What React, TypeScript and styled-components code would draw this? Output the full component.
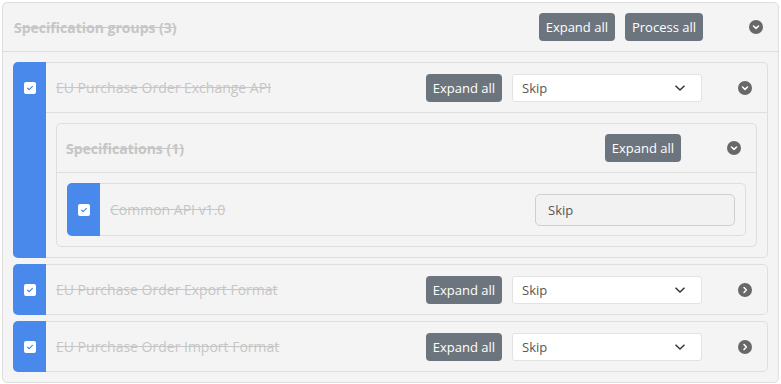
import React from "react";
import styled, { createGlobalStyle } from "styled-components";

const GlobalStyle = createGlobalStyle`
  body {
    margin: 0;
    background: #ffffff;
    font-family: "Open Sans", "Liberation Sans", sans-serif;
  }
`;

type Group = {
  name: string;
  expanded: boolean;
  specs: string[];
};

const groups: Group[] = [
  { name: "EU Purchase Order Exchange API", expanded: true, specs: ["Common API v1.0"] },
  { name: "EU Purchase Order Export Format", expanded: false, specs: [] },
  { name: "EU Purchase Order Import Format", expanded: false, specs: [] },
];

const ChevronDown = () => (
  <svg width="8" height="8" viewBox="0 0 8 8">
    <path d="M1.5 3 L4 5.4 L6.5 3" fill="none" stroke="#fff" strokeWidth="1.5" strokeLinecap="round" strokeLinejoin="round" />
  </svg>
);

const ChevronRight = () => (
  <svg width="8" height="8" viewBox="0 0 8 8">
    <path d="M3 1.5 L5.4 4 L3 6.5" fill="none" stroke="#fff" strokeWidth="1.5" strokeLinecap="round" strokeLinejoin="round" />
  </svg>
);

const Check = () => (
  <svg width="8" height="8" viewBox="0 0 8 8">
    <path d="M1.6 4.2 L3.3 5.7 L6.4 2.4" fill="none" stroke="#4a89ec" strokeWidth="1.2" strokeLinecap="round" strokeLinejoin="round" />
  </svg>
);

const Toggle = ({ open }: { open: boolean }) => (
  <ToggleCell>
    <ToggleCircle>{open ? <ChevronDown /> : <ChevronRight />}</ToggleCircle>
  </ToggleCell>
);

const SkipSelect = () => (
  <Select>
    <span>Skip</span>
    <svg width="12" height="8" viewBox="0 0 12 8">
      <path d="M1.5 1.8 L6 6 L10.5 1.8" fill="none" stroke="#333" strokeWidth="1.5" />
    </svg>
  </Select>
);

export default function App() {
  return (
    <Page>
      <GlobalStyle />
      <Card>
        <CardHeader $height={48} $inset={11}>
          <BoldTitle>Specification groups (3)</BoldTitle>
          <Actions $trail={31}>
            <Button>Expand all</Button>
            <Button>Process all</Button>
          </Actions>
          <Toggle open />
        </CardHeader>
        <CardBody>
          {groups.map((g) => (
            <GroupCard key={g.name}>
              <Stripe>
                <CheckRow $height={49}>
                  <CheckBox>
                    <Check />
                  </CheckBox>
                </CheckRow>
              </Stripe>
              <GroupMain>
                <RowHeader $height={49} $bordered={g.expanded}>
                  <Title>{g.name}</Title>
                  <Actions $trail={21}>
                    <Button>Expand all</Button>
                    <SkipSelect />
                  </Actions>
                  <Toggle open={g.expanded} />
                </RowHeader>
                {g.expanded && (
                  <GroupBody>
                    <Card>
                      <CardHeader $height={48} $inset={9}>
                        <BoldTitle>Specifications ({g.specs.length})</BoldTitle>
                        <Actions $trail={31}>
                          <Button>Expand all</Button>
                        </Actions>
                        <Toggle open />
                      </CardHeader>
                      <CardBody>
                        {g.specs.map((s) => (
                          <SpecCard key={s}>
                            <Stripe>
                              <CheckRow $height={51}>
                                <CheckBox>
                                  <Check />
                                </CheckBox>
                              </CheckRow>
                            </Stripe>
                            <SpecRow>
                              <Title>{s}</Title>
                              <SkipInput>Skip</SkipInput>
                            </SpecRow>
                          </SpecCard>
                        ))}
                      </CardBody>
                    </Card>
                  </GroupBody>
                )}
              </GroupMain>
            </GroupCard>
          ))}
        </CardBody>
      </Card>
    </Page>
  );
}

const Page = styled.div`
  padding: 2px;
  width: 777px;
`;

const Card = styled.div`
  background: #f4f4f4;
  border: 1px solid #dedede;
  border-radius: 5px;
`;

const CardHeader = styled.div<{ $height: number; $inset: number }>`
  display: flex;
  align-items: center;
  height: ${(p) => p.$height}px;
  padding-left: ${(p) => p.$inset}px;
  border-bottom: 1px solid #dedede;
`;

const CardBody = styled.div`
  display: flex;
  flex-direction: column;
  gap: 6px;
  padding: 10px;
`;

const BoldTitle = styled.div`
  flex: 1;
  font-size: 14px;
  font-weight: 700;
  color: #c6c6c6;
  text-decoration: line-through;
`;

const Title = styled.div`
  flex: 1;
  font-size: 14px;
  color: #c6c6c6;
  text-decoration: line-through;
`;

const Actions = styled.div<{ $trail: number }>`
  display: flex;
  align-items: center;
  gap: 10px;
  margin-right: ${(p) => p.$trail}px;
`;

const Button = styled.button`
  height: 28px;
  padding: 0 7px;
  border: none;
  border-radius: 4px;
  background: #6c757d;
  color: #ffffff;
  font-family: inherit;
  font-size: 13px;
`;

const ToggleCell = styled.div`
  display: flex;
  align-items: center;
  justify-content: center;
  width: 44px;
`;

const ToggleCircle = styled.div`
  display: flex;
  align-items: center;
  justify-content: center;
  width: 14px;
  height: 14px;
  border-radius: 50%;
  background: #686868;
`;

const Select = styled.div`
  display: flex;
  align-items: center;
  justify-content: space-between;
  box-sizing: border-box;
  width: 190px;
  height: 28px;
  padding: 0 15px 0 9px;
  background: #ffffff;
  border: 1px solid #e2e2e2;
  border-radius: 3px;
  font-size: 13px;
  color: #555;
`;

const GroupCard = styled.div`
  display: flex;
  background: #f4f4f4;
  border: 1px solid #dedede;
  border-left: none;
  border-radius: 5px;
`;

const Stripe = styled.div`
  width: 33px;
  flex-shrink: 0;
  margin: -1px 0;
  background: #4a89ec;
  border-radius: 5px 0 0 5px;
`;

const CheckRow = styled.div<{ $height: number }>`
  display: flex;
  align-items: center;
  justify-content: center;
  height: ${(p) => p.$height + 2}px;
`;

const CheckBox = styled.div`
  display: flex;
  align-items: center;
  justify-content: center;
  width: 12px;
  height: 12px;
  border-radius: 2px;
  background: #ffffff;
`;

const GroupMain = styled.div`
  flex: 1;
  min-width: 0;
`;

const RowHeader = styled.div<{ $height: number; $bordered: boolean }>`
  display: flex;
  align-items: center;
  height: ${(p) => p.$height}px;
  padding-left: 10px;
  border-bottom: ${(p) => (p.$bordered ? "1px solid #dedede" : "none")};
`;

const GroupBody = styled.div`
  padding: 10px;
`;

const SpecCard = styled(GroupCard)``;

const SpecRow = styled.div`
  flex: 1;
  display: flex;
  align-items: center;
  height: 51px;
  padding: 0 10px;
`;

const SkipInput = styled.div`
  display: flex;
  align-items: center;
  box-sizing: border-box;
  width: 200px;
  height: 32px;
  padding: 0 12px;
  background: #f2f2f2;
  border: 1px solid #cfcfcf;
  border-radius: 5px;
  font-size: 13px;
  color: #555;
`;
